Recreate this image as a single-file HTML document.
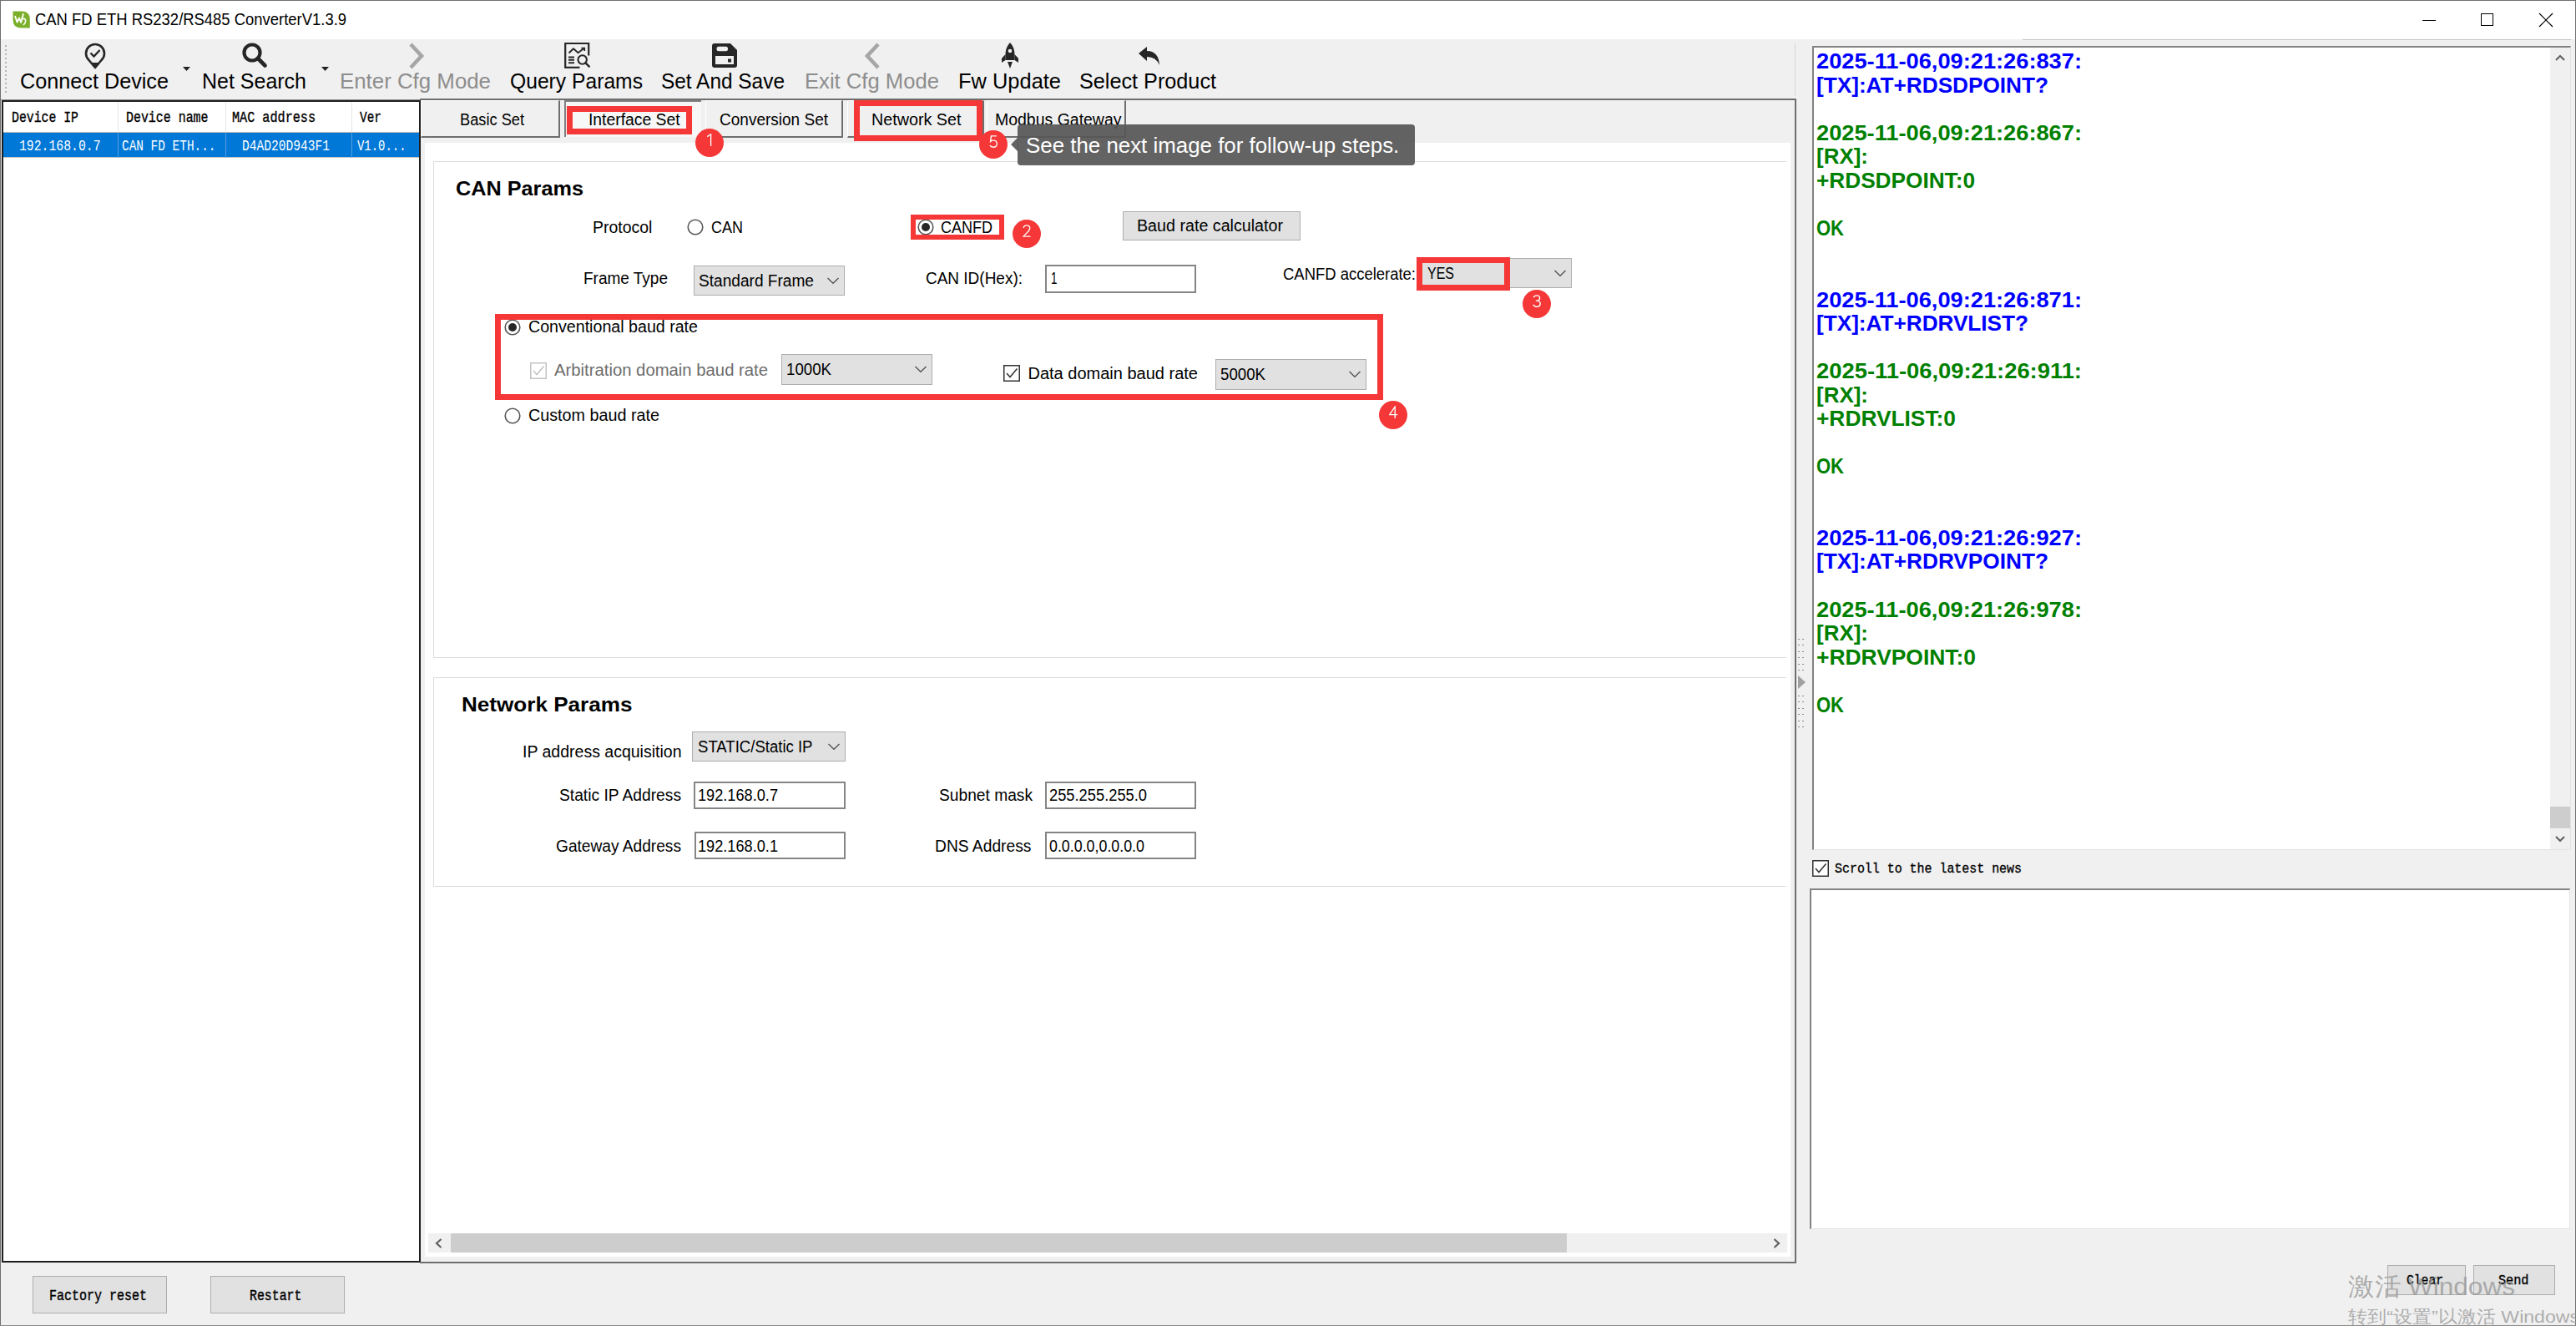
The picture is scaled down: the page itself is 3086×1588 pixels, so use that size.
<!DOCTYPE html>
<html><head><meta charset="utf-8"><style>
html,body{margin:0;padding:0;width:3086px;height:1588px;overflow:hidden;background:#f0f0f0}
div,span,svg{position:absolute}
span{white-space:nowrap;transform-origin:0 0}
</style></head><body>
<div style="left:0px;top:0px;width:3086px;height:47px;background:#fff"></div>
<div style="left:0px;top:0px;width:3086px;height:1px;background:#6f6f6f"></div>
<div style="left:0px;top:0px;width:1px;height:1588px;background:#6f6f6f"></div>
<div style="left:3085px;top:0px;width:1px;height:1588px;background:#6f6f6f"></div>
<div style="left:0px;top:1587px;width:3086px;height:1px;background:#8a8a8a"></div>
<svg style="position:absolute;left:14.5px;top:12.5px" width="21" height="21" viewBox="0 0 21 21"><path d="M0.5 0.5 H11 Q20.8 0.5 20.8 10 V20.4 H10 Q0.5 20.4 0.5 10.5Z" fill="#7cb02a"/><path d="M3.2 6.8 L5.6 13.6 L8 8.6 L10.2 13.8 L12.8 4" stroke="#fff" stroke-width="1.9" fill="none" stroke-linejoin="round" stroke-linecap="round"/><path d="M12.2 9.6 Q16 8.6 15.6 12.5 Q15.4 15 13.4 16.5" stroke="#fff" stroke-width="1.6" fill="none" stroke-linecap="round"/></svg>
<div style="left:2423px;top:47px;width:657px;height:1px;background:#c4c4c4"></div>
<div style="left:2150px;top:52px;width:1px;height:63px;background:#d8d8d8"></div>
<span id="t0" style="left:42px;top:13.07px;font:400 20px/20px 'Liberation Sans', sans-serif;color:#000;transform:scaleX(0.9219);">CAN FD ETH RS232/RS485 ConverterV1.3.9</span>
<div style="left:2902px;top:24px;width:16px;height:1px;background:#000"></div>
<div style="left:2972px;top:16px;width:15px;height:15px;border:1px solid #000;box-sizing:border-box"></div>
<svg style="position:absolute;left:3041px;top:15px" width="18" height="18" viewBox="0 0 18 18"><path d="M1 1 L17 17 M17 1 L1 17" stroke="#000" stroke-width="1.2"/></svg>
<div style="left:6px;top:54px;width:2px;height:2px;background:#b4b4b4"></div>
<div style="left:6px;top:59px;width:2px;height:2px;background:#b4b4b4"></div>
<div style="left:6px;top:64px;width:2px;height:2px;background:#b4b4b4"></div>
<div style="left:6px;top:69px;width:2px;height:2px;background:#b4b4b4"></div>
<div style="left:6px;top:74px;width:2px;height:2px;background:#b4b4b4"></div>
<div style="left:6px;top:79px;width:2px;height:2px;background:#b4b4b4"></div>
<div style="left:6px;top:84px;width:2px;height:2px;background:#b4b4b4"></div>
<div style="left:6px;top:89px;width:2px;height:2px;background:#b4b4b4"></div>
<div style="left:6px;top:94px;width:2px;height:2px;background:#b4b4b4"></div>
<div style="left:6px;top:99px;width:2px;height:2px;background:#b4b4b4"></div>
<div style="left:6px;top:104px;width:2px;height:2px;background:#b4b4b4"></div>
<div style="left:6px;top:109px;width:2px;height:2px;background:#b4b4b4"></div>
<svg style="position:absolute;left:100px;top:50px" width="28" height="33" viewBox="0 0 28 33"><path d="M14 31 L6.5 22 A11 11 0 1 1 21.5 22 Z" fill="none" stroke="#262626" stroke-width="2.6" stroke-linejoin="round"/><path d="M14 31 L9 25 H19Z" fill="#262626"/><path d="M8.5 13.5 L12.5 17.5 L19.5 10" fill="none" stroke="#262626" stroke-width="2.4"/></svg>
<svg style="position:absolute;left:289px;top:50px" width="33" height="33" viewBox="0 0 33 33"><circle cx="13" cy="13" r="9.5" fill="none" stroke="#262626" stroke-width="4.2"/><path d="M20 20 L28.5 28.5" stroke="#262626" stroke-width="4.6" stroke-linecap="round"/></svg>
<svg style="position:absolute;left:219px;top:80px" width="9" height="5"><path d="M0 0H9L4.5 5Z" fill="#222"/></svg>
<svg style="position:absolute;left:385px;top:80px" width="9" height="5"><path d="M0 0H9L4.5 5Z" fill="#222"/></svg>
<svg style="position:absolute;left:488px;top:51px" width="22" height="32" viewBox="0 0 22 32"><path d="M4 2 L17 16 L4 30" fill="none" stroke="#a6a6a6" stroke-width="4.6"/></svg>
<svg style="position:absolute;left:675px;top:51px" width="34" height="32" viewBox="0 0 34 32"><path d="M2.2 29.8 V1 H30.2 V15.4" fill="none" stroke="#262626" stroke-width="2.2"/><path d="M1.2 29.8 H19.5" fill="none" stroke="#262626" stroke-width="2.2"/><path d="M6.5 12.5 L12 7.2 L17.6 12.2 L24.6 6.8" fill="none" stroke="#262626" stroke-width="1.9" stroke-linejoin="round"/><path d="M21.4 6.6 H25.2 V10" fill="none" stroke="#262626" stroke-width="1.8"/><path d="M6 17.4H13 M6 20.8H13 M6 24.2H13" stroke="#262626" stroke-width="2"/><circle cx="22.7" cy="20.5" r="5.2" fill="none" stroke="#262626" stroke-width="2.1"/><path d="M26.4 24.3 L30.8 28.6" stroke="#262626" stroke-width="2.4" stroke-linecap="round"/></svg>
<svg style="position:absolute;left:852px;top:51px" width="32" height="31" viewBox="0 0 32 31"><path d="M1 4 Q1 1 4 1 H23 L31 9 V27 Q31 30 28 30 H4 Q1 30 1 27Z" fill="#262626"/><rect x="6.5" y="4.8" width="13.5" height="5.4" rx="2.5" fill="#f0f0f0"/><rect x="5" y="16" width="22" height="10" fill="#f0f0f0"/><rect x="20" y="19.5" width="4" height="4" fill="#262626"/></svg>
<svg style="position:absolute;left:1034px;top:51px" width="22" height="32" viewBox="0 0 22 32"><path d="M18 2 L5 16 L18 30" fill="none" stroke="#a6a6a6" stroke-width="4.6"/></svg>
<svg style="position:absolute;left:1198px;top:50px" width="24" height="33" viewBox="0 0 24 33"><path d="M12 1 Q18 7 17.5 17 L17.5 22 H6.5 L6.5 17 Q6 7 12 1Z" fill="#262626"/><path d="M6.5 15 L2 20 L2 25 L6.5 22Z M17.5 15 L22 20 L22 25 L17.5 22Z" fill="#262626"/><path d="M9 24 H15 L12 32Z" fill="#262626"/><circle cx="12" cy="11" r="2.3" fill="#f0f0f0"/></svg>
<svg style="position:absolute;left:1363px;top:55px" width="28" height="25" viewBox="0 0 28 25"><path d="M1 9 L11 1 V6 Q25 6 26 23 Q22 13 11 13 V18Z" fill="#262626"/></svg>
<span id="t1" style="left:24px;top:85.31px;font:400 25.5px/25.5px 'Liberation Sans', sans-serif;color:#000;transform:scaleX(0.9888);">Connect Device</span>
<span id="t2" style="left:241.5px;top:85.31px;font:400 25.5px/25.5px 'Liberation Sans', sans-serif;color:#000;transform:scaleX(0.9799);">Net Search</span>
<span id="t3" style="left:407px;top:85.31px;font:400 25.5px/25.5px 'Liberation Sans', sans-serif;color:#8d8d8d;transform:scaleX(1.0135);">Enter Cfg Mode</span>
<span id="t4" style="left:611px;top:85.31px;font:400 25.5px/25.5px 'Liberation Sans', sans-serif;color:#000;transform:scaleX(0.9672);">Query Params</span>
<span id="t5" style="left:792px;top:85.31px;font:400 25.5px/25.5px 'Liberation Sans', sans-serif;color:#000;transform:scaleX(0.9576);">Set And Save</span>
<span id="t6" style="left:964px;top:85.31px;font:400 25.5px/25.5px 'Liberation Sans', sans-serif;color:#8d8d8d;transform:scaleX(1.0053);">Exit Cfg Mode</span>
<span id="t7" style="left:1148px;top:85.31px;font:400 25.5px/25.5px 'Liberation Sans', sans-serif;color:#000;transform:scaleX(0.9975);">Fw Update</span>
<span id="t8" style="left:1293px;top:85.31px;font:400 25.5px/25.5px 'Liberation Sans', sans-serif;color:#000;transform:scaleX(0.9889);">Select Product</span>
<div style="left:1px;top:119px;width:502px;height:1px;background:#8c8c8c"></div>
<div style="left:2px;top:120px;width:502px;height:1392px;background:#fff;border:2px solid #1e1e1e;box-sizing:border-box"></div>
<div style="left:4px;top:158px;width:498px;height:30px;background:#0078d7"></div>
<div style="left:4px;top:188px;width:498px;height:1px;background:#c4c4c4"></div>
<div style="left:141px;top:122px;width:1px;height:36px;background:#e6e6e6"></div>
<div style="left:141px;top:158px;width:1px;height:31px;background:#5a9fdc"></div>
<div style="left:270px;top:122px;width:1px;height:36px;background:#e6e6e6"></div>
<div style="left:270px;top:158px;width:1px;height:31px;background:#5a9fdc"></div>
<div style="left:421px;top:122px;width:1px;height:36px;background:#e6e6e6"></div>
<div style="left:421px;top:158px;width:1px;height:31px;background:#5a9fdc"></div>
<div style="left:4px;top:157.5px;width:498px;height:1.0px;background:#bfb8b0"></div>
<span id="t9" style="left:14px;top:132.21px;font:400 18px/18px 'Liberation Mono', monospace;color:#000;transform:scaleX(0.8229);-webkit-text-stroke:0.35px #000">Device IP</span>
<span id="t10" style="left:150.5px;top:132.21px;font:400 18px/18px 'Liberation Mono', monospace;color:#000;transform:scaleX(0.8289);-webkit-text-stroke:0.35px #000">Device name</span>
<span id="t11" style="left:278px;top:132.21px;font:400 18px/18px 'Liberation Mono', monospace;color:#000;transform:scaleX(0.8416);-webkit-text-stroke:0.35px #000">MAC address</span>
<span id="t12" style="left:431px;top:132.21px;font:400 18px/18px 'Liberation Mono', monospace;color:#000;transform:scaleX(0.8023);-webkit-text-stroke:0.35px #000">Ver</span>
<span id="t13" style="left:22.5px;top:166.21px;font:400 18px/18px 'Liberation Mono', monospace;color:#fff;transform:scaleX(0.8205);">192.168.0.7</span>
<span id="t14" style="left:146px;top:166.21px;font:400 18px/18px 'Liberation Mono', monospace;color:#fff;transform:scaleX(0.8011);">CAN FD ETH...</span>
<span id="t15" style="left:290px;top:166.21px;font:400 18px/18px 'Liberation Mono', monospace;color:#fff;transform:scaleX(0.8100);">D4AD20D943F1</span>
<span id="t16" style="left:428px;top:166.21px;font:400 18px/18px 'Liberation Mono', monospace;color:#fff;transform:scaleX(0.7749);">V1.0...</span>
<div style="left:503px;top:118px;width:1649px;height:1395px;border:2px solid #6e6e6e;border-left:none;box-sizing:border-box"></div>
<div style="left:503px;top:118px;width:1649px;height:2px;background:#6e6e6e"></div>
<div style="left:509px;top:171px;width:1636px;height:1334px;background:#fff"></div>
<div style="left:504px;top:120px;width:167px;height:45px;background:#f0f0f0;border-left:1px solid #fff;border-top:1px solid #fff;border-right:2px solid #6e6e6e;border-bottom:2px solid #6e6e6e;box-sizing:border-box"></div>
<div style="left:676px;top:120px;width:164px;height:44px;background:#f7f7f7;border-left:2px solid #808080;border-top:2px solid #808080;box-sizing:border-box"></div>
<div style="left:845px;top:120px;width:165px;height:45px;background:#f0f0f0;border-left:1px solid #fff;border-top:1px solid #fff;border-right:2px solid #6e6e6e;border-bottom:2px solid #6e6e6e;box-sizing:border-box"></div>
<div style="left:1015px;top:120px;width:164px;height:45px;background:#f0f0f0;border-left:1px solid #fff;border-top:1px solid #fff;border-right:2px solid #6e6e6e;border-bottom:2px solid #6e6e6e;box-sizing:border-box"></div>
<div style="left:1182px;top:120px;width:167px;height:45px;background:#f0f0f0;border-left:1px solid #fff;border-top:1px solid #fff;border-right:2px solid #6e6e6e;border-bottom:2px solid #6e6e6e;box-sizing:border-box"></div>
<span id="t17" style="left:551px;top:132.87px;font:400 20px/20px 'Liberation Sans', sans-serif;color:#000;transform:scaleX(0.9114);">Basic Set</span>
<span id="t18" style="left:705px;top:132.87px;font:400 20px/20px 'Liberation Sans', sans-serif;color:#000;transform:scaleX(0.9664);">Interface Set</span>
<span id="t19" style="left:862px;top:132.87px;font:400 20px/20px 'Liberation Sans', sans-serif;color:#000;transform:scaleX(0.9506);">Conversion Set</span>
<span id="t20" style="left:1044px;top:132.87px;font:400 20px/20px 'Liberation Sans', sans-serif;color:#000;transform:scaleX(0.9859);">Network Set</span>
<span id="t21" style="left:1191.5px;top:132.87px;font:400 20px/20px 'Liberation Sans', sans-serif;color:#000;transform:scaleX(0.9734);">Modbus Gateway</span>
<div style="left:519px;top:193px;width:1621px;height:595px;border:1px solid #dcdcdc;border-right:none;box-sizing:border-box"></div>
<div style="left:519px;top:811px;width:1621px;height:251px;border:1px solid #dcdcdc;border-right:none;box-sizing:border-box"></div>
<span id="t22" style="left:546px;top:214.18px;font:700 24px/24px 'Liberation Sans', sans-serif;color:#000;transform:scaleX(1.0522);">CAN Params</span>
<span id="t23" style="left:709.6px;top:261.67px;font:400 20px/20px 'Liberation Sans', sans-serif;color:#000;transform:scaleX(0.9731);">Protocol</span>
<svg style="position:absolute;left:822.5px;top:261.8px" width="20" height="20" viewBox="0 0 20 20"><circle cx="10" cy="10" r="8.8" fill="#fff" stroke="#555" stroke-width="1.6"/></svg>
<span id="t24" style="left:852px;top:261.67px;font:400 20px/20px 'Liberation Sans', sans-serif;color:#000;transform:scaleX(0.8997);">CAN</span>
<svg style="position:absolute;left:1098.5px;top:261.8px" width="20" height="20" viewBox="0 0 20 20"><circle cx="10" cy="10" r="8.8" fill="#fff" stroke="#555" stroke-width="1.6"/><circle cx="10" cy="10" r="5" fill="#262626"/></svg>
<span id="t25" style="left:1127px;top:261.67px;font:400 20px/20px 'Liberation Sans', sans-serif;color:#000;transform:scaleX(0.9000);">CANFD</span>
<div style="left:1345px;top:253px;width:213px;height:35px;background:#e1e1e1;border:1px solid #adadad;box-sizing:border-box"></div>
<span id="t26" style="left:1362px;top:259.57px;font:400 20px/20px 'Liberation Sans', sans-serif;color:#000;transform:scaleX(0.9838);">Baud rate calculator</span>
<span id="t27" style="left:699px;top:322.57px;font:400 20px/20px 'Liberation Sans', sans-serif;color:#000;transform:scaleX(0.9498);">Frame Type</span>
<div style="left:831px;top:317.5px;width:181px;height:36.5px;background:#e1e1e1;border:1px solid #adadad;box-sizing:border-box"></div>
<svg style="position:absolute;left:990px;top:330.75px" width="16" height="10" viewBox="0 0 16 10"><path d="M1.5 2 L8 8.2 L14.5 2" fill="none" stroke="#555" stroke-width="1.4"/></svg>
<span id="t28" style="left:837px;top:325.67px;font:400 20px/20px 'Liberation Sans', sans-serif;color:#000;transform:scaleX(0.9549);">Standard Frame</span>
<span id="t29" style="left:1108.7px;top:323.07px;font:400 20px/20px 'Liberation Sans', sans-serif;color:#000;transform:scaleX(0.9490);">CAN ID(Hex):</span>
<div style="left:1252px;top:317px;width:181px;height:34px;background:#fff;border:2px solid #858585;box-sizing:border-box"></div>
<span id="t30" style="left:1258.6px;top:323.07px;font:400 20px/20px 'Liberation Sans', sans-serif;color:#000;transform:scaleX(0.6652);">1</span>
<span id="t31" style="left:1537px;top:317.87px;font:400 20px/20px 'Liberation Sans', sans-serif;color:#000;transform:scaleX(0.9229);">CANFD accelerate:</span>
<div style="left:1703px;top:308.6px;width:180px;height:36.39999999999998px;background:#e1e1e1;border:1px solid #adadad;box-sizing:border-box"></div>
<svg style="position:absolute;left:1861px;top:321.8px" width="16" height="10" viewBox="0 0 16 10"><path d="M1.5 2 L8 8.2 L14.5 2" fill="none" stroke="#555" stroke-width="1.4"/></svg>
<span id="t32" style="left:1710px;top:316.87px;font:400 20px/20px 'Liberation Sans', sans-serif;color:#000;transform:scaleX(0.7994);">YES</span>
<svg style="position:absolute;left:604px;top:382px" width="20" height="20" viewBox="0 0 20 20"><circle cx="10" cy="10" r="8.8" fill="#fff" stroke="#555" stroke-width="1.6"/><circle cx="10" cy="10" r="5" fill="#262626"/></svg>
<span id="t33" style="left:633px;top:380.77px;font:400 20px/20px 'Liberation Sans', sans-serif;color:#000;transform:scaleX(0.9815);">Conventional baud rate</span>
<svg style="position:absolute;left:635px;top:434px" width="20" height="20" viewBox="0 0 20 20"><rect x="0.75" y="0.75" width="18.5" height="18.5" fill="#fff" stroke="#c2c2c2" stroke-width="1.5"/><path d="M4 10 L8 14.5 L16.5 4.5" fill="none" stroke="#c2c2c2" stroke-width="1.5"/></svg>
<span id="t34" style="left:664px;top:432.77px;font:400 20px/20px 'Liberation Sans', sans-serif;color:#6d6d6d;transform:scaleX(1.0144);">Arbitration domain baud rate</span>
<div style="left:936px;top:423.6px;width:181px;height:37.0px;background:#e1e1e1;border:1px solid #adadad;box-sizing:border-box"></div>
<svg style="position:absolute;left:1095px;top:437.1px" width="16" height="10" viewBox="0 0 16 10"><path d="M1.5 2 L8 8.2 L14.5 2" fill="none" stroke="#555" stroke-width="1.4"/></svg>
<span id="t35" style="left:942px;top:432.07px;font:400 20px/20px 'Liberation Sans', sans-serif;color:#000;transform:scaleX(0.9335);">1000K</span>
<svg style="position:absolute;left:1202px;top:437px" width="20" height="20" viewBox="0 0 20 20"><rect x="0.75" y="0.75" width="18.5" height="18.5" fill="#fff" stroke="#333" stroke-width="1.5"/><path d="M4 10 L8 14.5 L16.5 4.5" fill="none" stroke="#333" stroke-width="1.5"/></svg>
<span id="t36" style="left:1231.5px;top:436.67px;font:400 20px/20px 'Liberation Sans', sans-serif;color:#000;">Data domain baud rate</span>
<div style="left:1456px;top:429.8px;width:181px;height:36.80000000000001px;background:#e1e1e1;border:1px solid #adadad;box-sizing:border-box"></div>
<svg style="position:absolute;left:1615px;top:443.20000000000005px" width="16" height="10" viewBox="0 0 16 10"><path d="M1.5 2 L8 8.2 L14.5 2" fill="none" stroke="#555" stroke-width="1.4"/></svg>
<span id="t37" style="left:1462px;top:437.77px;font:400 20px/20px 'Liberation Sans', sans-serif;color:#000;transform:scaleX(0.9335);">5000K</span>
<svg style="position:absolute;left:604px;top:488px" width="20" height="20" viewBox="0 0 20 20"><circle cx="10" cy="10" r="8.8" fill="#fff" stroke="#555" stroke-width="1.6"/></svg>
<span id="t38" style="left:633px;top:487.47px;font:400 20px/20px 'Liberation Sans', sans-serif;color:#000;transform:scaleX(0.9875);">Custom baud rate</span>
<span id="t39" style="left:552.6px;top:832.08px;font:700 24px/24px 'Liberation Sans', sans-serif;color:#000;transform:scaleX(1.0867);">Network Params</span>
<span id="t40" style="left:625.5px;top:890.27px;font:400 20px/20px 'Liberation Sans', sans-serif;color:#000;transform:scaleX(0.9754);">IP address acquisition</span>
<div style="left:829px;top:876px;width:184px;height:36px;background:#e1e1e1;border:1px solid #adadad;box-sizing:border-box"></div>
<svg style="position:absolute;left:991px;top:889.0px" width="16" height="10" viewBox="0 0 16 10"><path d="M1.5 2 L8 8.2 L14.5 2" fill="none" stroke="#555" stroke-width="1.4"/></svg>
<span id="t41" style="left:835.5px;top:883.77px;font:400 20px/20px 'Liberation Sans', sans-serif;color:#000;transform:scaleX(0.9279);">STATIC/Static IP</span>
<span id="t42" style="left:670px;top:942.07px;font:400 20px/20px 'Liberation Sans', sans-serif;color:#000;transform:scaleX(0.9609);">Static IP Address</span>
<div style="left:831px;top:935.7px;width:182px;height:33.799999999999955px;background:#fff;border:2px solid #858585;box-sizing:border-box"></div>
<span id="t43" style="left:836px;top:942.07px;font:400 20px/20px 'Liberation Sans', sans-serif;color:#000;transform:scaleX(0.9086);">192.168.0.7</span>
<span id="t44" style="left:666px;top:1002.57px;font:400 20px/20px 'Liberation Sans', sans-serif;color:#000;transform:scaleX(0.9569);">Gateway Address</span>
<div style="left:832px;top:995.8px;width:181px;height:33.5px;background:#fff;border:2px solid #858585;box-sizing:border-box"></div>
<span id="t45" style="left:836px;top:1002.57px;font:400 20px/20px 'Liberation Sans', sans-serif;color:#000;transform:scaleX(0.9086);">192.168.0.1</span>
<span id="t46" style="left:1125px;top:942.07px;font:400 20px/20px 'Liberation Sans', sans-serif;color:#000;transform:scaleX(0.9594);">Subnet mask</span>
<div style="left:1252px;top:935.7px;width:181px;height:33.69999999999993px;background:#fff;border:2px solid #858585;box-sizing:border-box"></div>
<span id="t47" style="left:1257px;top:942.07px;font:400 20px/20px 'Liberation Sans', sans-serif;color:#000;transform:scaleX(0.9147);">255.255.255.0</span>
<span id="t48" style="left:1119.6px;top:1002.57px;font:400 20px/20px 'Liberation Sans', sans-serif;color:#000;transform:scaleX(0.9612);">DNS Address</span>
<div style="left:1252px;top:995.8px;width:181px;height:33.5px;background:#fff;border:2px solid #858585;box-sizing:border-box"></div>
<span id="t49" style="left:1257px;top:1002.57px;font:400 20px/20px 'Liberation Sans', sans-serif;color:#000;transform:scaleX(0.8914);">0.0.0.0,0.0.0.0</span>
<div style="left:513px;top:1477px;width:1628px;height:23px;background:#f0f0f0"></div>
<div style="left:540px;top:1477px;width:1337px;height:23px;background:#cdcdcd"></div>
<svg style="position:absolute;left:519px;top:1482px" width="14" height="14" viewBox="0 0 14 14"><path d="M9.5 2 L4 7 L9.5 12" fill="none" stroke="#606060" stroke-width="2.2"/></svg>
<svg style="position:absolute;left:2121px;top:1482px" width="14" height="14" viewBox="0 0 14 14"><path d="M4.5 2 L10 7 L4.5 12" fill="none" stroke="#606060" stroke-width="2.2"/></svg>
<div style="left:2154px;top:764.5px;width:2px;height:1.0px;background:#8a8a8a"></div>
<div style="left:2159px;top:764.5px;width:2px;height:1.0px;background:#8a8a8a"></div>
<div style="left:2154px;top:772px;width:2px;height:1px;background:#8a8a8a"></div>
<div style="left:2159px;top:772px;width:2px;height:1px;background:#8a8a8a"></div>
<div style="left:2154px;top:779.5px;width:2px;height:1.0px;background:#8a8a8a"></div>
<div style="left:2159px;top:779.5px;width:2px;height:1.0px;background:#8a8a8a"></div>
<div style="left:2154px;top:787px;width:2px;height:1px;background:#8a8a8a"></div>
<div style="left:2159px;top:787px;width:2px;height:1px;background:#8a8a8a"></div>
<div style="left:2154px;top:794.5px;width:2px;height:1.0px;background:#8a8a8a"></div>
<div style="left:2159px;top:794.5px;width:2px;height:1.0px;background:#8a8a8a"></div>
<div style="left:2154px;top:802px;width:2px;height:1px;background:#8a8a8a"></div>
<div style="left:2159px;top:802px;width:2px;height:1px;background:#8a8a8a"></div>
<div style="left:2154px;top:832.5px;width:2px;height:1.0px;background:#8a8a8a"></div>
<div style="left:2159px;top:832.5px;width:2px;height:1.0px;background:#8a8a8a"></div>
<div style="left:2154px;top:840px;width:2px;height:1px;background:#8a8a8a"></div>
<div style="left:2159px;top:840px;width:2px;height:1px;background:#8a8a8a"></div>
<div style="left:2154px;top:847.5px;width:2px;height:1.0px;background:#8a8a8a"></div>
<div style="left:2159px;top:847.5px;width:2px;height:1.0px;background:#8a8a8a"></div>
<div style="left:2154px;top:855px;width:2px;height:1px;background:#8a8a8a"></div>
<div style="left:2159px;top:855px;width:2px;height:1px;background:#8a8a8a"></div>
<div style="left:2154px;top:862.5px;width:2px;height:1.0px;background:#8a8a8a"></div>
<div style="left:2159px;top:862.5px;width:2px;height:1.0px;background:#8a8a8a"></div>
<div style="left:2154px;top:870px;width:2px;height:1px;background:#8a8a8a"></div>
<div style="left:2159px;top:870px;width:2px;height:1px;background:#8a8a8a"></div>
<svg style="position:absolute;left:2154px;top:809px" width="9" height="16"><path d="M0 0 L9 8 L0 16Z" fill="#a0a0a0"/></svg>
<div style="left:2171px;top:55px;width:909px;height:963px;background:#fff;border-top:2px solid #828282;border-left:2px solid #828282;border-right:1px solid #e3e3e3;border-bottom:1px solid #e3e3e3;box-sizing:border-box"></div>
<div style="left:3055px;top:57px;width:24px;height:960px;background:#f0f0f0"></div>
<div style="left:3055px;top:966px;width:24px;height:26px;background:#cdcdcd"></div>
<svg style="position:absolute;left:3060px;top:64px" width="14" height="10" viewBox="0 0 14 10"><path d="M2 8 L7 3 L12 8" fill="none" stroke="#606060" stroke-width="2"/></svg>
<svg style="position:absolute;left:3060px;top:1000px" width="14" height="10" viewBox="0 0 14 10"><path d="M2 2 L7 7 L12 2" fill="none" stroke="#606060" stroke-width="2"/></svg>
<span id="log0" style="left:2176px;top:61.33px;font:700 25px/25px 'Liberation Sans', sans-serif;color:#0000ff;transform:scaleX(1.0894);">2025-11-06,09:21:26:837:</span>
<span id="log1" style="left:2176px;top:89.86px;font:700 25px/25px 'Liberation Sans', sans-serif;color:#0000ff;transform:scaleX(1.0471);">[TX]:AT+RDSDPOINT?</span>
<span id="log3" style="left:2176px;top:146.92px;font:700 25px/25px 'Liberation Sans', sans-serif;color:#008000;transform:scaleX(1.0894);">2025-11-06,09:21:26:867:</span>
<span id="log4" style="left:2176px;top:175.45px;font:700 25px/25px 'Liberation Sans', sans-serif;color:#008000;transform:scaleX(1.0382);">[RX]:</span>
<span id="log5" style="left:2176px;top:203.98px;font:700 25px/25px 'Liberation Sans', sans-serif;color:#008000;transform:scaleX(1.0480);">+RDSDPOINT:0</span>
<span id="log7" style="left:2176px;top:261.04px;font:700 25px/25px 'Liberation Sans', sans-serif;color:#008000;transform:scaleX(0.8800);">OK</span>
<span id="log10" style="left:2176px;top:346.63px;font:700 25px/25px 'Liberation Sans', sans-serif;color:#0000ff;transform:scaleX(1.0894);">2025-11-06,09:21:26:871:</span>
<span id="log11" style="left:2176px;top:375.16px;font:700 25px/25px 'Liberation Sans', sans-serif;color:#0000ff;transform:scaleX(1.0461);">[TX]:AT+RDRVLIST?</span>
<span id="log13" style="left:2176px;top:432.22px;font:700 25px/25px 'Liberation Sans', sans-serif;color:#008000;transform:scaleX(1.0946);">2025-11-06,09:21:26:911:</span>
<span id="log14" style="left:2176px;top:460.75px;font:700 25px/25px 'Liberation Sans', sans-serif;color:#008000;transform:scaleX(1.0382);">[RX]:</span>
<span id="log15" style="left:2176px;top:489.28px;font:700 25px/25px 'Liberation Sans', sans-serif;color:#008000;transform:scaleX(1.0529);">+RDRVLIST:0</span>
<span id="log17" style="left:2176px;top:546.34px;font:700 25px/25px 'Liberation Sans', sans-serif;color:#008000;transform:scaleX(0.8800);">OK</span>
<span id="log20" style="left:2176px;top:631.93px;font:700 25px/25px 'Liberation Sans', sans-serif;color:#0000ff;transform:scaleX(1.0894);">2025-11-06,09:21:26:927:</span>
<span id="log21" style="left:2176px;top:660.46px;font:700 25px/25px 'Liberation Sans', sans-serif;color:#0000ff;transform:scaleX(1.0489);">[TX]:AT+RDRVPOINT?</span>
<span id="log23" style="left:2176px;top:717.52px;font:700 25px/25px 'Liberation Sans', sans-serif;color:#008000;transform:scaleX(1.0894);">2025-11-06,09:21:26:978:</span>
<span id="log24" style="left:2176px;top:746.05px;font:700 25px/25px 'Liberation Sans', sans-serif;color:#008000;transform:scaleX(1.0382);">[RX]:</span>
<span id="log25" style="left:2176px;top:774.58px;font:700 25px/25px 'Liberation Sans', sans-serif;color:#008000;transform:scaleX(1.0562);">+RDRVPOINT:0</span>
<span id="log27" style="left:2176px;top:831.64px;font:700 25px/25px 'Liberation Sans', sans-serif;color:#008000;transform:scaleX(0.8800);">OK</span>
<svg style="position:absolute;left:2171px;top:1030px" width="20" height="20" viewBox="0 0 20 20"><rect x="0.75" y="0.75" width="18.5" height="18.5" fill="#fff" stroke="#333" stroke-width="1.5"/><path d="M4 10 L8 14.5 L16.5 4.5" fill="none" stroke="#333" stroke-width="1.5"/></svg>
<span id="t68" style="left:2198px;top:1031.98px;font:400 17px/17px 'Liberation Mono', monospace;color:#000;transform:scaleX(0.8783);-webkit-text-stroke:0.35px #000">Scroll to the latest news</span>
<div style="left:2168px;top:1064px;width:911px;height:408px;background:#fff;border-top:2px solid #828282;border-left:2px solid #828282;border-right:1px solid #e3e3e3;border-bottom:1px solid #e3e3e3;box-sizing:border-box"></div>
<div style="left:39px;top:1528px;width:161px;height:45px;background:#e1e1e1;border:1px solid #adadad;box-sizing:border-box"></div>
<span id="t69" style="left:59px;top:1543.21px;font:400 18px/18px 'Liberation Mono', monospace;color:#000;transform:scaleX(0.8331);-webkit-text-stroke:0.4px #000">Factory reset</span>
<div style="left:252px;top:1528px;width:161px;height:45px;background:#e1e1e1;border:1px solid #adadad;box-sizing:border-box"></div>
<span id="t70" style="left:299px;top:1543.21px;font:400 18px/18px 'Liberation Mono', monospace;color:#000;transform:scaleX(0.8251);-webkit-text-stroke:0.4px #000">Restart</span>
<div style="left:2860px;top:1515px;width:94px;height:36px;background:#e1e1e1;border:1px solid #adadad;box-sizing:border-box"></div>
<span id="t71" style="left:2883px;top:1524.98px;font:400 17px/17px 'Liberation Mono', monospace;color:#000;transform:scaleX(0.8625);-webkit-text-stroke:0.4px #000">Clear</span>
<div style="left:2963px;top:1515px;width:98px;height:36px;background:#e1e1e1;border:1px solid #adadad;box-sizing:border-box"></div>
<span id="t72" style="left:2992.5px;top:1524.98px;font:400 17px/17px 'Liberation Mono', monospace;color:#000;transform:scaleX(0.8943);-webkit-text-stroke:0.4px #000">Send</span>
<span id="wm1" style="left:2813px;top:1525.60px;font:400 30px/30px 'Liberation Sans', sans-serif;color:rgba(150,150,150,0.75);transform:scaleX(1.0524);">激活 Windows</span>
<span id="wm2" style="left:2813px;top:1566.22px;font:400 21px/21px 'Liberation Sans', sans-serif;color:rgba(150,150,150,0.75);transform:scaleX(1.0991);">转到“设置”以激活 Windows</span>
<div style="left:679px;top:127px;width:150px;height:34px;border:7px solid #f53737;box-sizing:border-box"></div>
<div style="left:1091px;top:257px;width:112px;height:30px;border:6px solid #f53737;box-sizing:border-box"></div>
<div style="left:1697px;top:307.6px;width:112px;height:40.099999999999966px;border:7px solid #f53737;box-sizing:border-box"></div>
<div style="left:593px;top:376.3px;width:1064px;height:102.5px;border:7px solid #f53737;box-sizing:border-box"></div>
<div style="left:1023px;top:120px;width:154px;height:49px;border:7px solid #f53737;box-sizing:border-box"></div>
<div style="left:833px;top:154px;width:34px;height:34px;border-radius:50%;background:#f53737"></div>
<svg style="position:absolute;left:844.8px;top:160px" width="11" height="16" viewBox="0 0 11 16"><path d="M2.2 3.6 L6.6 0.8 V15" fill="none" stroke="#fff" stroke-width="1.35"/></svg>
<div style="left:1213px;top:263px;width:34px;height:34px;border-radius:50%;background:#f53737"></div>
<svg style="position:absolute;left:1224.8px;top:269px" width="11" height="16" viewBox="0 0 11 16"><path d="M1.2 4 Q1.4 0.8 5 0.8 Q8.8 0.8 8.8 4.1 Q8.8 6.4 6 9 L1 14.1 H9.6" fill="none" stroke="#fff" stroke-width="1.35"/></svg>
<div style="left:1824px;top:347px;width:34px;height:34px;border-radius:50%;background:#f53737"></div>
<svg style="position:absolute;left:1835.8px;top:353px" width="11" height="16" viewBox="0 0 11 16"><path d="M1.2 3.2 Q2 0.8 5 0.8 Q8.6 0.8 8.6 3.9 Q8.6 7 4.8 7.1 H3.8 M4.8 7.1 Q9.2 7.2 9.2 10.7 Q9.2 14.2 5 14.2 Q1.8 14.2 0.8 11.7" fill="none" stroke="#fff" stroke-width="1.35"/></svg>
<div style="left:1652px;top:480px;width:34px;height:34px;border-radius:50%;background:#f53737"></div>
<svg style="position:absolute;left:1663.8px;top:486px" width="11" height="16" viewBox="0 0 11 16"><path d="M7.2 15 V1 L0.8 10.6 H10.2" fill="none" stroke="#fff" stroke-width="1.35"/></svg>
<div style="left:1173px;top:156px;width:34px;height:34px;border-radius:50%;background:#f53737"></div>
<svg style="position:absolute;left:1184.8px;top:162px" width="11" height="16" viewBox="0 0 11 16"><path d="M8.8 0.9 H2.4 L1.6 7.4 Q3 6.1 5.1 6.1 Q9.3 6.1 9.3 10.2 Q9.3 14.2 5 14.2 Q2 14.2 0.9 12" fill="none" stroke="#fff" stroke-width="1.35"/></svg>
<div style="left:1219px;top:149px;width:476px;height:48.5px;background:rgba(86,86,86,0.92);border-radius:4px"></div>
<svg style="position:absolute;left:1210px;top:164px" width="10" height="18"><path d="M10 0 L1 9 L10 18Z" fill="rgba(86,86,86,0.92)"/></svg>
<span id="t75" style="left:1228.7px;top:160.99px;font:400 26px/26px 'Liberation Sans', sans-serif;color:#fff;transform:scaleX(0.9952);">See the next image for follow-up steps.</span>
</body></html>
